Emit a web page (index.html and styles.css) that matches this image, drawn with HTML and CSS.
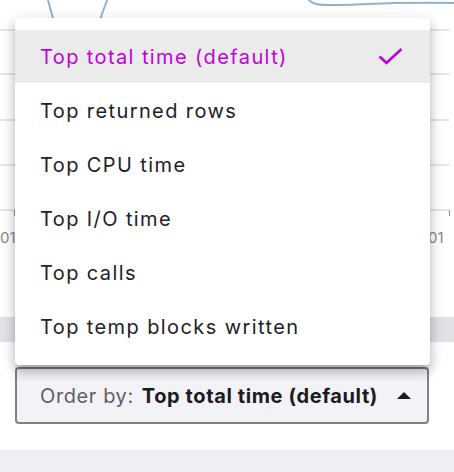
FILE: index.html
```html
<!DOCTYPE html>
<html>
<head>
<meta charset="utf-8">
<link rel="stylesheet" href="styles.css">
</head>
<body>
<div class="page">
  <div class="chart">
    <svg class="chart-svg" width="454" height="317" viewBox="0 0 454 317">
      <g stroke="#dedde6" stroke-width="1.5">
        <line x1="0" y1="30" x2="449" y2="30"/>
        <line x1="0" y1="74" x2="449" y2="74"/>
        <line x1="0" y1="120" x2="449" y2="120"/>
        <line x1="0" y1="165" x2="449" y2="165"/>
        <line x1="0" y1="210" x2="449" y2="210"/>
      </g>
      <g stroke="#9a99a0" stroke-width="1.2">
        <line x1="14.5" y1="210" x2="14.5" y2="216"/>
        <line x1="449.5" y1="210" x2="449.5" y2="216"/>
      </g>
      <g fill="#8a8990" font-family="Inter, sans-serif" font-size="15">
        <text x="0" y="243">01</text>
        <text x="428" y="243">01</text>
      </g>
      <g fill="none" stroke="#8fb4cb" stroke-width="2">
        <path d="M48 0 C50 8 52 14 55 26"/>
        <path d="M108 -2 C105 6 102 12 99 24"/>
        <path d="M305 -4 C310 2 314 5 326 5 C360 5 380 2 454 3"/>
      </g>
    </svg>
  </div>
  <div class="band"></div>
  <div class="controls">
    <div class="select">
      <span class="select-label">Order by:</span>
      <span class="select-value">Top total time (default)</span>
      <span class="select-arrow"></span>
    </div>
  </div>
  <div class="footer-band"></div>

  <ul class="menu">
    <li class="menu-item selected">
      <span>Top total time (default)</span>
      <svg class="check" width="26" height="20" viewBox="0 0 26 20"><path d="M1.5 9.5 L8.5 16 L23.5 2" fill="none" stroke="#c100db" stroke-width="2.6"/></svg>
    </li>
    <li class="menu-item">Top returned rows</li>
    <li class="menu-item">Top CPU time</li>
    <li class="menu-item">Top I/O time</li>
    <li class="menu-item">Top calls</li>
    <li class="menu-item">Top temp blocks written</li>
  </ul>
</div>
</body>
</html>
```

FILE: styles.css
```css
* { box-sizing: border-box; }
html, body {
  margin: 0;
  padding: 0;
  background: #fff;
}
body {
  font-family: Inter, "Noto Sans", sans-serif;
  width: 454px;
  height: 472px;
  overflow: hidden;
}
.page {
  position: relative;
  width: 454px;
  height: 472px;
  display: flex;
  flex-direction: column;
}
.chart {
  height: 317px;
  flex: none;
}
.chart-svg {
  display: block;
  overflow: hidden;
}
.band {
  height: 25px;
  flex: none;
  background: #e2e1e7;
}
.controls {
  padding: 25px 25px 0 15px;
  flex: none;
}
.select {
  height: 57px;
  border: 2px solid #807e87;
  border-radius: 4px;
  background: #f3f2f7;
  display: flex;
  align-items: center;
  padding: 0 16px 0 23px;
  font-size: 20px;
  letter-spacing: 0.6px;
}
.select-label {
  color: #5f5e66;
  margin-right: 8px;
}
.select-value {
  color: #1c1b20;
  font-weight: 700;
  flex: 1;
}
.select-arrow {
  width: 0;
  height: 0;
  border-left: 7px solid transparent;
  border-right: 7px solid transparent;
  border-bottom: 7px solid #1c1b20;
}
.footer-band {
  margin-top: auto;
  height: 22px;
  background: #efeef4;
}
.menu {
  position: absolute;
  left: 15px;
  top: 18px;
  width: 415px;
  margin: 0;
  padding: 12px 0;
  list-style: none;
  background: #fff;
  border-radius: 4px;
  box-shadow: 0 5px 5px -3px rgba(0,0,0,.2), 0 8px 10px 1px rgba(0,0,0,.14), 0 3px 14px 2px rgba(0,0,0,.12);
}
.menu-item {
  height: 54px;
  display: flex;
  align-items: center;
  justify-content: space-between;
  padding: 1px 26px 0 25px;
  font-size: 20px;
  letter-spacing: 1.4px;
  color: #222127;
}
.menu-item.selected {
  background: #ebebeb;
  color: #c100db;
  height: 53px;
}
.check {
  display: block;
}
```
